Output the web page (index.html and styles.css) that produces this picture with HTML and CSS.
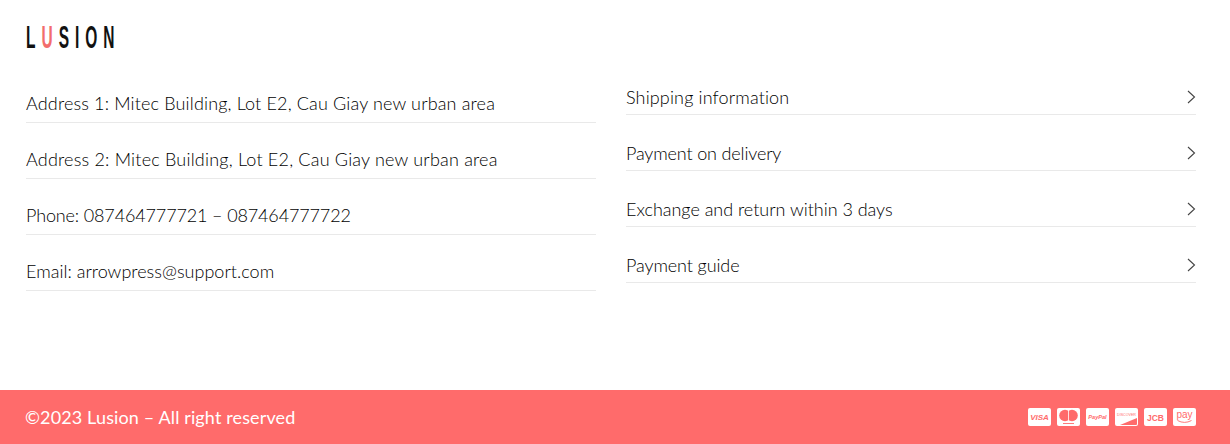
FILE: index.html
```html
<!DOCTYPE html>
<html lang="en">
<head>
    <meta charset="UTF-8">
    <meta name="viewport" content="width=device-width, initial-scale=1.0">
    <title>Lusion</title>
    <link rel="stylesheet" href="styles.css">
</head>
<body>
    <div class="logo-row">
        <div class="logo">L<span class="logo-accent">U</span>SION</div>
    </div>

    <div class="columns">
        <ul class="contact-list">
            <li class="contact-item"><span class="address-one">Address 1: Mitec Building, Lot E2, Cau Giay new urban area</span></li>
            <li class="contact-item"><span class="address-two">Address 2: Mitec Building, Lot E2, Cau Giay new urban area</span></li>
            <li class="contact-item"><span class="phone">Phone: 087464777721 – 087464777722</span></li>
            <li class="contact-item"><span class="email">Email: arrowpress@support.com</span></li>
        </ul>
        <ul class="link-list">
            <li class="link-item"><span class="shipping">Shipping information</span>
                <svg class="chevron" viewBox="0 0 9 14"><path d="M1 1l6.5 6L1 13"/></svg></li>
            <li class="link-item"><span class="delivery">Payment on delivery</span>
                <svg class="chevron" viewBox="0 0 9 14"><path d="M1 1l6.5 6L1 13"/></svg></li>
            <li class="link-item"><span class="exchange">Exchange and return within 3 days</span>
                <svg class="chevron" viewBox="0 0 9 14"><path d="M1 1l6.5 6L1 13"/></svg></li>
            <li class="link-item"><span class="guide">Payment guide</span>
                <svg class="chevron" viewBox="0 0 9 14"><path d="M1 1l6.5 6L1 13"/></svg></li>
        </ul>
    </div>

    <footer class="footer">
        <span class="copyright">©2023 Lusion – All right reserved</span>
        <div class="cards">
            <svg class="card" viewBox="0 0 23 18"><rect width="23" height="18" rx="2" fill="#fff"/><text x="11.5" y="12.3" class="card-text visa">VISA</text></svg>
            <svg class="card" viewBox="0 0 23 18"><rect width="23" height="18" rx="2" fill="#fff"/><circle cx="8" cy="7.5" r="5.8" fill="#ff6b6b"/><circle cx="15" cy="7.5" r="5.8" fill="#ff6b6b"/><path d="M11.5 3v9" stroke="#fff" stroke-width=".8"/><path d="M6 15.5h11" stroke="#ff6b6b" stroke-width=".9"/></svg>
            <svg class="card" viewBox="0 0 23 18"><rect width="23" height="18" rx="2" fill="#fff"/><text x="11.5" y="11.2" class="card-text paypal">PayPal</text></svg>
            <svg class="card" viewBox="0 0 23 18"><rect width="23" height="18" rx="2" fill="#fff"/><text x="11.5" y="7.5" class="card-text discover">DISCOVER</text><path d="M5 17L22 10v6a1 1 0 0 1-1 1z" fill="#ff6b6b"/></svg>
            <svg class="card" viewBox="0 0 23 18"><rect width="23" height="18" rx="2" fill="#fff"/><text x="11.5" y="12.5" class="card-text jcb">JCB</text></svg>
            <svg class="card" viewBox="0 0 23 18"><rect width="23" height="18" rx="2" fill="#fff"/><text x="11.5" y="9.5" class="card-text pay">pay</text><path d="M4.5 12.5q7 3.8 14 0" fill="none" stroke="#ff6b6b" stroke-width=".9"/></svg>
        </div>
    </footer>
</body>
</html>
```

FILE: styles.css
```css
html, body {
    margin: 0;
    padding: 0;
}

body {
    background-color: #fff;
    color: #000;
    font-family: "Lato", "Open Sans", sans-serif;
    font-size: 18px;
    font-weight: 300;
    height: 444px;
    overflow: hidden;
    display: flex;
    flex-direction: column;
}

.logo-row {
    padding: 21px 26px 0;
    height: 38px;
}

.logo {
    font-family: "Liberation Sans", sans-serif;
    font-weight: bold;
    font-size: 31px;
    line-height: 34px;
    letter-spacing: 12px;
    color: #111;
    white-space: nowrap;
    transform: scaleX(0.5);
    transform-origin: left center;
}

.logo-accent {
    color: #f26d6d;
}

.columns {
    display: grid;
    grid-template-columns: 570px 570px;
    column-gap: 30px;
    padding: 0 34px 0 26px;
    flex: 1;
}

.contact-list,
.link-list {
    list-style: none;
    margin: 0;
    padding: 0;
}

.contact-list {
    padding-top: 8px;
}

.contact-item,
.link-item {
    height: 55px;
    border-bottom: 1px solid #e9e9e9;
    display: flex;
    align-items: flex-end;
}

.contact-item {
    line-height: 38px;
}

.link-item {
    justify-content: space-between;
    line-height: 33px;
}

/* Lato runs a bit different from the original text, so each line is nudged */
.address-one { letter-spacing: 0.155px; }
.address-two { letter-spacing: 0.2px; }
.phone { letter-spacing: -0.14px; }
.email { letter-spacing: 0.02px; }
.shipping { letter-spacing: 0.15px; }
.delivery { letter-spacing: -0.15px; }
.exchange { letter-spacing: -0.02px; }
.guide { letter-spacing: -0.1px; }

.chevron {
    width: 9px;
    height: 14px;
    margin: 0 0 10px 0;
    fill: none;
    stroke: #444;
    stroke-width: 1.1;
}

.footer {
    height: 54px;
    background-color: #ff6b6b;
    display: flex;
    align-items: center;
    justify-content: space-between;
    padding: 0 34px 0 26px;
}

.copyright {
    color: #fff;
    font-size: 18px;
    font-weight: 400;
    letter-spacing: 0.13px;
    margin-left: -1px;
}

.cards {
    display: flex;
    gap: 6px;
}

.card {
    width: 23px;
    height: 18px;
}

.card-text {
    text-anchor: middle;
    fill: #ff6b6b;
    font-family: "Liberation Sans", sans-serif;
    font-weight: bold;
}

.visa { font-size: 8px; font-style: italic; }
.paypal { font-size: 5.6px; font-style: italic; }
.discover { font-size: 3.6px; font-weight: normal; }
.jcb { font-size: 8.5px; }
.pay { font-size: 10px; font-weight: normal; }
```
